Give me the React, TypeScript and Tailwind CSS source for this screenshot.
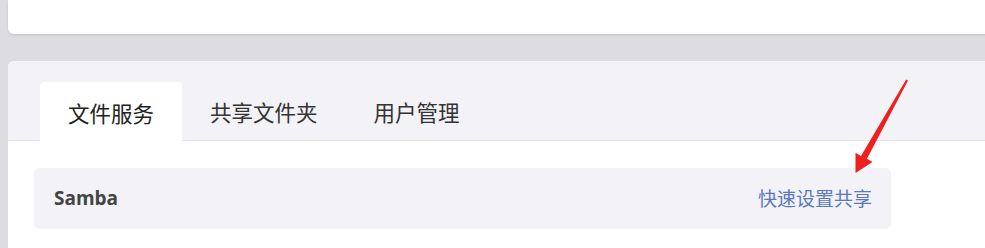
import React from "react";

export default function App() {
  const cjk = { fontFamily: '"Noto Sans CJK SC", "Noto Sans", sans-serif' };
  return (
    <div className="relative w-[985px] h-[248px] overflow-hidden bg-[#dcdce1] pl-2" style={cjk}>
      <div className="w-[1000px] h-[34px] bg-white rounded-bl-md shadow-[0_1px_3px_rgba(0,0,0,0.12)]" />
      <div className="mt-[27px] w-[1000px] h-[200px] bg-white rounded-tl-md overflow-hidden">
        <div className="h-[80px] bg-[#f2f2f7] flex items-end pl-8 border-b border-[#e2e2e7]">
          <div className="h-[59px] px-7 pt-[3px] flex items-center bg-white rounded-t-sm text-[21.5px] text-[#222] mb-[-1px]">
            文件服务
          </div>
          <div className="h-[59px] px-7 pt-[3px] flex items-center text-[21.5px] text-[#333]">
            共享文件夹
          </div>
          <div className="h-[59px] px-7 pt-[3px] flex items-center text-[21.5px] text-[#333]">
            用户管理
          </div>
        </div>
        <div className="pt-[27px] pl-[26px]">
          <div className="w-[857px] h-[60px] bg-[#f2f2f7] rounded-md shadow-[0_1px_2px_rgba(0,0,0,0.06)] flex items-center justify-between pl-[20px] pr-[19px]">
            <span
              className="text-[19px] font-bold text-[#444] pt-[1px]"
              style={{ fontFamily: '"Open Sans", "Noto Sans", sans-serif' }}
            >
              Samba
            </span>
            <span className="text-[19px] text-[#5a78c0] pt-[1px]">快速设置共享</span>
          </div>
        </div>
      </div>
      <svg className="absolute left-0 top-0 pointer-events-none" width="985" height="248">
        <polygon
          points="908,80.4 867,158.8 872.5,162 855.5,173 855.5,152.8 861,156 906.2,79.6"
          fill="#ee1f1f"
        />
      </svg>
    </div>
  );
}
